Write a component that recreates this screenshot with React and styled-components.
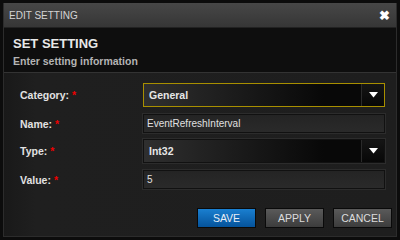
import React from "react";
import styled, { createGlobalStyle } from "styled-components";

const Global = createGlobalStyle`
  html, body { margin: 0; padding: 0; background: #0c0c0c; }
  body { font-family: "Liberation Sans", Arial, sans-serif; }
`;

const Dialog = styled.div`
  width: 394px;
  height: 234px;
  margin: 3px 3px;
  box-sizing: border-box;
  display: flex;
  flex-direction: column;
  background: #1c1c1c;
  border-left: 1px solid #2c2c2c;
  border-right: 1px solid #2c2c2c;
  border-bottom: 1px solid #2c2c2c;
`;

const TitleBar = styled.div`
  height: 24px;
  display: flex;
  align-items: center;
  justify-content: space-between;
  padding: 0 6px 0 5px;
  background: linear-gradient(#474747, #363636);
  border-bottom: 1px solid #222;
`;

const Title = styled.span`
  color: #d4d4d4;
  font-size: 10px;
`;

const Close = styled.span`
  color: #fff;
  font-size: 13px;
  font-weight: bold;
  line-height: 1;
`;

const Header = styled.div`
  height: 45px;
  box-sizing: border-box;
  padding: 8px 0 0 9px;
  background: #0e0e0e;
  border-bottom: 1px solid #333;
`;

const Heading = styled.div`
  color: #e8e8e8;
  font-size: 13px;
  font-weight: bold;
  line-height: 15px;
`;

const Sub = styled.div`
  color: #b4b4b4;
  font-size: 10.5px;
  font-weight: bold;
  margin-top: 4px;
`;

const Body = styled.div`
  flex: 1;
  display: flex;
  flex-direction: column;
  padding: 10px 9px 0 16px;
  background: linear-gradient(90deg, #191919, #1f1f1f 8%, #1e1e1e);
`;

const Row = styled.div`
  display: grid;
  grid-template-columns: 123px 242px;
  align-items: center;
  margin-bottom: ${(p) => p.$gap}px;
`;

const Label = styled.label`
  color: #e2e2e2;
  font-size: 10.5px;
  font-weight: bold;
  span { color: #e00; margin-left: 3px; }
`;

const Select = styled.div`
  height: ${(p) => p.$h}px;
  box-sizing: border-box;
  display: flex;
  border: 1px solid ${(p) => (p.$focus ? "#a88f00" : "#111")};
  box-shadow: ${(p) => (p.$focus ? "none" : "0 0 0 1px #2c2c2c")};
  background: linear-gradient(90deg, #2f2f2f, #080808 75%);
`;

const SelectText = styled.div`
  flex: 1;
  display: flex;
  align-items: center;
  padding-left: 5px;
  color: #e6e6e6;
  font-size: 10.5px;
  font-weight: bold;
`;

const Arrow = styled.div`
  width: 22px;
  display: flex;
  align-items: center;
  justify-content: center;
  border-left: 1px solid #2a2a2a;
  background: linear-gradient(#151515, #070707);
`;

const Input = styled.div`
  height: 19px;
  box-sizing: border-box;
  display: flex;
  align-items: center;
  padding-left: 3px;
  color: #e0e0e0;
  font-size: 10px;
  border: 1px solid #111;
  box-shadow: 0 0 0 1px #2c2c2c;
  background: linear-gradient(#242424, #2a2a2a);
`;

const Buttons = styled.div`
  display: flex;
  justify-content: flex-end;
  gap: 9px;
  margin-top: 19px;
  margin-right: -5px;
`;

const Button = styled.button`
  width: 59px;
  height: 20px;
  padding: 0;
  font-family: "Liberation Sans", Arial, sans-serif;
  font-size: 10.5px;
  color: ${(p) => (p.$primary ? "#e8eef6" : "#dcdcdc")};
  border: 1px solid #0a0a0a;
  background: ${(p) =>
    p.$primary
      ? "linear-gradient(#1a7fd0, #05539b)"
      : "linear-gradient(#5a5a5a, #3c3c3c)"};
`;

const Triangle = () => (
  <svg width="9" height="6" viewBox="0 0 9 6">
    <path d="M0 0 H9 L4.5 5.5 Z" fill="#fff" />
  </svg>
);

export default function App() {
  return (
    <>
      <Global />
      <Dialog>
        <TitleBar>
          <Title>EDIT SETTING</Title>
          <Close>✖</Close>
        </TitleBar>
        <Header>
          <Heading>SET SETTING</Heading>
          <Sub>Enter setting information</Sub>
        </Header>
        <Body>
          <Row $gap={7}>
            <Label>Category:<span>*</span></Label>
            <Select $h={24} $focus>
              <SelectText>General</SelectText>
              <Arrow><Triangle /></Arrow>
            </Select>
          </Row>
          <Row $gap={6}>
            <Label>Name:<span>*</span></Label>
            <Input>EventRefreshInterval</Input>
          </Row>
          <Row $gap={7}>
            <Label>Type:<span>*</span></Label>
            <Select $h={24}>
              <SelectText>Int32</SelectText>
              <Arrow><Triangle /></Arrow>
            </Select>
          </Row>
          <Row $gap={0}>
            <Label>Value:<span>*</span></Label>
            <Input>5</Input>
          </Row>
          <Buttons>
            <Button $primary>SAVE</Button>
            <Button>APPLY</Button>
            <Button>CANCEL</Button>
          </Buttons>
        </Body>
      </Dialog>
    </>
  );
}
